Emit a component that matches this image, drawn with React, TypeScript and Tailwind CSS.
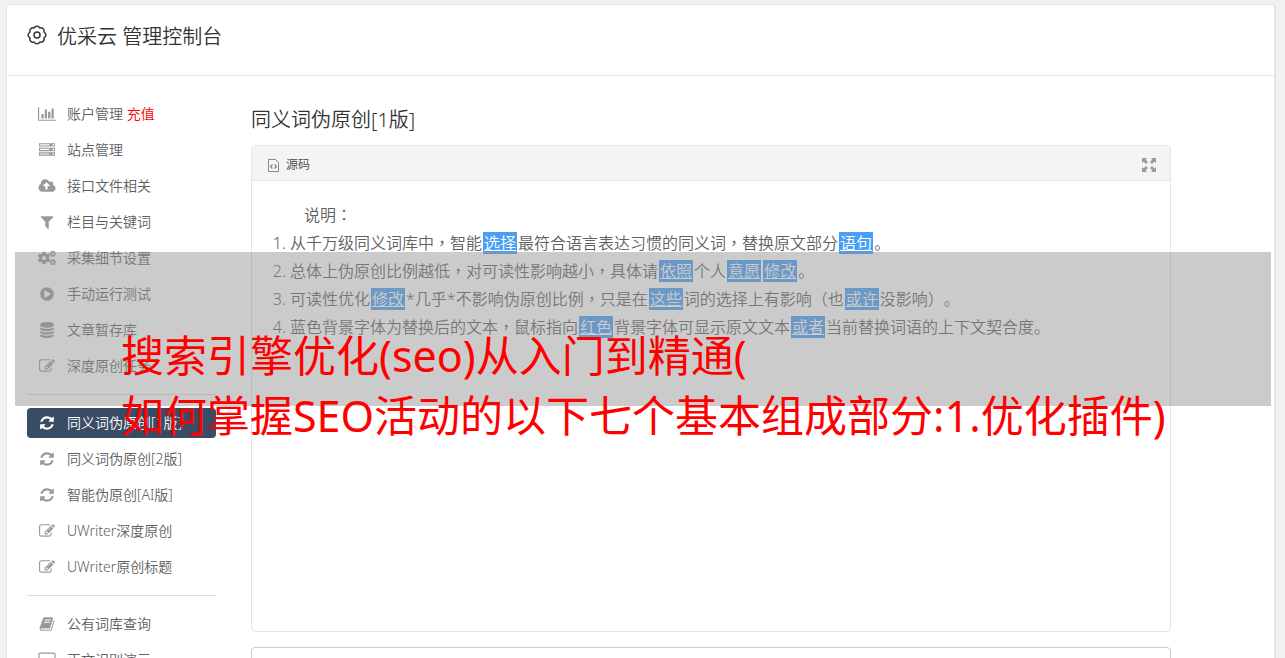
import React from 'react';
import { FaCogs, FaPlayCircle } from 'react-icons/fa';

const FONT = "font-['Noto_Sans','Noto_Sans_CJK_SC',sans-serif]";

// 1792-unit glyphs, drawn at 16px so that the 14px body of each fits the line
const GLYPHS = {
  chart:
    'M640 896v512h-256v-512h256zm384-512v1024h-256v-1024h256zm1024 1152v128h-2048v-1536h128v1408h1920zm-640-896v768h-256v-768h256zm384-384v1152h-256v-1152h256z',
  server:
    'M128 1408h1024v-128h-1024v128zm0-512h1024v-128h-1024v128zm1568 448q0-40-28-68t-68-28-68 28-28 68 28 68 68 28 68-28 28-68zm-1568-960h1024v-128h-1024v128zm1568 448q0-40-28-68t-68-28-68 28-28 68 28 68 68 28 68-28 28-68zm0-512q0-40-28-68t-68-28-68 28-28 68 28 68 68 28 68-28 28-68zm96 832v384h-1792v-384h1792zm0-512v384h-1792v-384h1792zm0-512v384h-1792v-384h1792z',
  upload:
    'M1280 864q0-14-9-23l-352-352q-9-9-23-9t-23 9l-351 351q-10 12-10 24 0 14 9 23t23 9h224v352q0 13 9.5 22.5t22.5 9.5h192q13 0 22.5-9.5t9.5-22.5v-352h224q13 0 22.5-9.5t9.5-22.5zm640 288q0 159-112.5 271.5t-271.5 112.5h-1088q-185 0-316.5-131.5t-131.5-316.5q0-130 70-240t188-165q-2-30-2-43 0-212 150-362t362-150q156 0 285.5 87t188.5 231q71-62 166-62 106 0 181 75t75 181q0 76-41 138 130 31 213.5 135.5t83.5 238.5z',
  filter:
    'M1595 295q17 41-14 70l-493 493v742q0 42-39 59-13 5-25 5-27 0-45-19l-256-256q-19-19-19-45v-486l-493-493q-31-29-14-70 17-39 59-39h1280q42 0 59 39z',
  database:
    'M896 768q237 0 443-43t325-127v170q0 69-103 128t-280 93.5-385 34.5-385-34.5-280-93.5-103-128v-170q119 84 325 127t443 43zm0 768q237 0 443-43t325-127v170q0 69-103 128t-280 93.5-385 34.5-385-34.5-280-93.5-103-128v-170q119 84 325 127t443 43zm0-384q237 0 443-43t325-127v170q0 69-103 128t-280 93.5-385 34.5-385-34.5-280-93.5-103-128v-170q119 84 325 127t443 43zm0-1152q208 0 385 34.5t280 93.5 103 128v128q0 69-103 128t-280 93.5-385 34.5-385-34.5-280-93.5-103-128v-128q0-69 103-128t280-93.5 385-34.5z',
  edit: 'M888 1184l116-116-152-152-116 116v56h96v96h56zm440-720q-16-16-33 1l-350 350q-17 17-1 33t33-1l350-350q17-17 1-33zm80 594v190q0 119-84.5 203.5t-203.5 84.5h-832q-119 0-203.5-84.5t-84.5-203.5v-832q0-119 84.5-203.5t203.5-84.5h832q63 0 117 25 15 7 18 23 3 17-9 29l-49 49q-14 14-32 8-23-6-45-6h-832q-66 0-113 47t-47 113v832q0 66 47 113t113 47h832q66 0 113-47t47-113v-126q0-13 9-22l64-64q15-15 35-7t20 29zm-96-738l288 288-672 672h-288v-288zm444 132l-92 92-288-288 92-92q28-28 68-28t68 28l152 152q28 28 28 68t-28 68z',
  refresh:
    'M1639 1056q0 5-1 7-64 268-268 434.5t-478 166.5q-146 0-282.5-55t-243.5-157l-129 129q-19 19-45 19t-45-19-19-45v-448q0-26 19-45t45-19h448q26 0 45 19t19 45-19 45l-137 137q71 66 161 102t187 36q134 0 250-65t186-179q11-17 53-117 8-23 30-23h192q13 0 22.5 9.5t9.5 22.5zm25-800v448q0 26-19 45t-45 19h-448q-26 0-45-19t-19-45 19-45l138-138q-148-137-349-137-134 0-250 65t-186 179q-11 17-53 117-8 23-30 23h-199q-13 0-22.5-9.5t-9.5-22.5v-7q65-268 270-434.5t480-166.5q146 0 284 55.5t245 156.5l130-129q19-19 45-19t45 19 19 45z',
  book: 'M1703 478q40 57 18 129l-275 906q-19 64-76.5 107.5t-122.5 43.5h-923q-77 0-148.5-53.5t-99.5-131.5q-24-67-2-127 0-4 3-27t4-37q1-8-3-21.5t-3-19.5q2-11 8-21t16.5-23.5 16.5-23.5q23-38 45-91.5t30-91.5q3-10 .5-30t-.5-28q3-11 17-28t17-23q21-36 42-92t25-90q1-9-2.5-32t.5-28q4-13 22-30.5t22-22.5q19-26 42.5-84.5t27.5-96.5q1-8-3-25.5t-2-26.5q2-8 9-18t18-23 17-21q8-12 16.5-30.5t15-35 16-36 19.5-32 26.5-23.5 36-11.5 47.5 5.5l-1 3q38-9 51-9h761q74 0 114 56t18 130l-274 906q-36 119-71.5 153.5t-128.5 34.5h-869q-27 0-38 15-11 16-1 43 24 70 144 70h923q29 0 56-15.5t35-41.5l300-987q7-22 5-57 38 15 59 43zm-1064 2q-4 13 2 22.5t20 9.5h608q13 0 25.5-9.5t16.5-22.5l21-64q4-13-2-22.5t-20-9.5h-608q-13 0-25.5 9.5t-16.5 22.5zm-83 256q-4 13 2 22.5t20 9.5h608q13 0 25.5-9.5t16.5-22.5l21-64q4-13-2-22.5t-20-9.5h-608q-13 0-25.5 9.5t-16.5 22.5z',
  desktop:
    'M1792 1056v-832q0-13-9.5-22.5t-22.5-9.5h-1600q-13 0-22.5 9.5t-9.5 22.5v832q0 13 9.5 22.5t22.5 9.5h1600q13 0 22.5-9.5t9.5-22.5zm128-832v1088q0 66-47 113t-113 47h-544q0 37 16 77.5t32 71 16 43.5q0 26-19 45t-45 19h-512q-26 0-45-19t-19-45q0-14 16-44t32-70 16-78h-544q-66 0-113-47t-47-113v-1088q0-66 47-113t113-47h1600q66 0 113 47t47 113z',
};

type Glyph = keyof typeof GLYPHS;

const WIDE: Glyph[] = ['chart', 'upload', 'desktop'];

function Icon({ name }: { name: Glyph }) {
  const wide = WIDE.includes(name);
  return (
    <svg
      viewBox={name === 'chart' ? '0 0 2048 1792' : wide ? '0 0 1920 1792' : '0 0 1792 1792'}
      className={wide ? 'h-4 w-[18px]' : 'h-4 w-4'}
      fill="currentColor"
      aria-hidden="true"
    >
      <path d={GLYPHS[name]} />
    </svg>
  );
}

interface Item {
  label: string;
  icon: React.ReactNode;
  extra?: string;
  active?: boolean;
}

const groups: Item[][] = [
  [
    { label: '账户管理', icon: <Icon name="chart" />, extra: '充值' },
    { label: '站点管理', icon: <Icon name="server" /> },
    { label: '接口文件相关', icon: <Icon name="upload" /> },
    { label: '栏目与关键词', icon: <Icon name="filter" /> },
    { label: '采集细节设置', icon: <FaCogs className="h-4 w-[18px]" /> },
    { label: '手动运行测试', icon: <FaPlayCircle className="h-3.5 w-3.5" /> },
    { label: '文章暂存库', icon: <Icon name="database" /> },
    { label: '深度原创任务', icon: <Icon name="edit" /> },
  ],
  [
    { label: '同义词伪原创[1版]', icon: <Icon name="refresh" />, active: true },
    { label: '同义词伪原创[2版]', icon: <Icon name="refresh" /> },
    { label: '智能伪原创[AI版]', icon: <Icon name="refresh" /> },
    { label: 'UWriter深度原创', icon: <Icon name="edit" /> },
    { label: 'UWriter原创标题', icon: <Icon name="edit" /> },
  ],
  [
    { label: '公有词库查询', icon: <Icon name="book" /> },
    { label: '正文识别演示', icon: <Icon name="desktop" /> },
  ],
];

// Words between braces were replaced and get the blue background
const notes = [
  '从千万级同义词库中，智能{选择}最符合语言表达习惯的同义词，替换原文部分{语句}。',
  '总体上伪原创比例越低，对可读性影响越小，具体请{依照}个人{意愿}{修改}。',
  '可读性优化{修改}*几乎*不影响伪原创比例，只是在{这些}词的选择上有影响（也{或许}没影响）。',
  '蓝色背景字体为替换后的文本，鼠标指向{红色}背景字体可显示原文文本{或者}当前替换词语的上下文契合度。',
];

function Note({ text }: { text: string }) {
  return (
    <>
      {text.split(/(\{.+?\}|[，：（）])/).map((part, i) => {
        if (part.startsWith('{')) {
          return (
            <span key={i} className="mx-px bg-[#4a9ff5] px-px text-white underline">
              {part.slice(1, -1)}
            </span>
          );
        }
        // centred full-width punctuation
        if (/^[，：（）]$/.test(part)) {
          return (
            <span key={i} className="font-['Noto_Sans_CJK_TC',sans-serif] leading-none">
              {part}
            </span>
          );
        }
        return part;
      })}
    </>
  );
}

function Sidebar() {
  return (
    <nav className="w-[189px] shrink-0 text-sm text-[#606060]">
      {groups.map((items, i) => (
        <React.Fragment key={i}>
          {i > 0 && <hr className="my-[13px] border-[#ddd]" />}
          <ul className="flex flex-col gap-1.5">
            {items.map((item) => (
              <li key={item.label}>
                <a
                  href="#"
                  className={
                    item.active
                      ? 'flex h-[30px] items-center gap-2.5 rounded bg-[#3a4b66] px-2.5 text-white'
                      : 'flex h-[30px] items-center gap-2.5 rounded px-2.5'
                  }
                >
                  <span
                    className={
                      item.active
                        ? 'flex w-5 shrink-0 justify-center'
                        : 'flex w-5 shrink-0 justify-center text-[#999]'
                    }
                  >
                    {item.icon}
                  </span>
                  <span className="whitespace-nowrap">
                    {item.label}
                    {item.extra && <span className="text-[#f00]"> {item.extra}</span>}
                  </span>
                </a>
              </li>
            ))}
          </ul>
        </React.Fragment>
      ))}
    </nav>
  );
}

function GearIcon() {
  return (
    <svg viewBox="0 0 20 20" className="h-5 w-5" fill="none" stroke="currentColor" strokeWidth="1.5" aria-hidden="true">
      <circle cx="10" cy="10" r="3" />
      <path
        strokeLinejoin="round"
        d="M16.930 7.130A3.100 3.100 0 0 1 16.930 12.870A3.100 3.100 0 0 1 12.870 16.930A3.100 3.100 0 0 1 7.130 16.930A3.100 3.100 0 0 1 3.070 12.870A3.100 3.100 0 0 1 3.070 7.130A3.100 3.100 0 0 1 7.130 3.070A3.100 3.100 0 0 1 12.870 3.070A3.100 3.100 0 0 1 16.930 7.130z"
      />
    </svg>
  );
}

export default function App() {
  return (
    <div className={`relative h-screen overflow-hidden bg-[#f1f1f1] pt-1 pr-[9px] pl-1.5 font-[350] ${FONT}`}>
      <div className="min-h-full rounded border border-r-2 border-[#e5e5e5] bg-white">
        <header className="flex h-[71px] items-start gap-2.5 border-b border-[#e5e5e5] px-5 pt-[17px] text-[#333]">
          <span className="flex h-[26px] items-center">
            <GearIcon />
          </span>
          <h1 className="text-xl leading-[30px]">优采云 管理控制台</h1>
        </header>

        <div className="flex gap-[35px] pt-[23px] pr-[103px] pl-5">
          <Sidebar />
          <main className="min-w-0 flex-1">
            <h2 className="mt-1.5 mb-2.5 text-xl leading-[30px] text-[#333]">同义词伪原创[1版]</h2>

            <section className="rounded border border-[#e5e5e5]">
              <div className="flex h-[35px] items-center justify-between rounded-t border-b border-[#e5e5e5] bg-[#f4f4f4] px-3.5 pt-[3px] text-xs text-[#444]">
                <div className="flex items-center gap-1.5">
                  <svg viewBox="0 0 14 16" className="h-4 w-3.5 text-[#888]" fill="none" stroke="currentColor" aria-hidden="true">
                    <path d="M2.500 2.500h7l3 3v9h-10z" />
                    <path strokeWidth="1.300" d="M6.500 7.500l-2 2 2 2M8.500 7.500l2 2-2 2" />
                  </svg>
                  <span>源码</span>
                </div>
                <button type="button" aria-label="全屏" className="text-[#999]">
                  <svg viewBox="0 0 14 14" className="h-3.5 w-3.5" fill="currentColor" aria-hidden="true">
                    <path d="M0 0h5L3.500 1.500l2.500 2.500L4 6 1.500 3.500 0 5zM14 0v5l-1.500-1.500L10 6 8 4l2.500-2.500L9 0zM0 14V9l1.500 1.500L4 8l2 2-2.500 2.500L5 14zM14 14H9l1.500-1.500L8 10l2-2 2.500 2.500L14 9z" />
                  </svg>
                </button>
              </div>
              <div className="min-h-[450px] p-5 text-base leading-7 text-[#606060] [text-spacing-trim:space-all]">
                <p className="indent-8">
                  <Note text="说明：" />
                </p>
                <ol className="list-decimal pl-[18px]">
                  {notes.map((note) => (
                    <li key={note}>
                      <Note text={note} />
                    </li>
                  ))}
                </ol>
              </div>
            </section>

            <textarea
              aria-label="原文"
              className="mt-[15px] block h-40 w-full resize-none rounded border border-[#ccc] p-3"
            />
          </main>
        </div>
      </div>

      <div className="pointer-events-none absolute top-[252px] right-3.5 left-[15px] h-[154px] bg-[#919191]/47" />
      <p className="pointer-events-none absolute top-[326px] left-[121px] text-[43px] leading-[60px] font-normal whitespace-nowrap text-[#f00]">
        搜索引擎优化(seo)从入门到精通(
        <br />
        如何掌握SEO活动的以下七个基本组成部分:1.优化插件)
      </p>
    </div>
  );
}
